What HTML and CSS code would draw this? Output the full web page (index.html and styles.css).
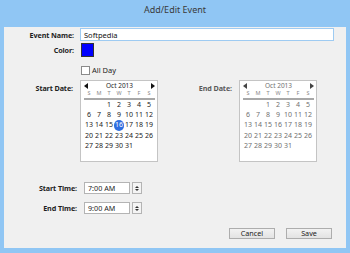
FILE: index.html
```html
<!DOCTYPE html>
<html lang="en">
<head>
    <meta charset="UTF-8">
    <title>Add/Edit Event</title>
    <link rel="stylesheet" href="styles.css">
</head>
<body>
    <div class="window">
        <div class="titlebar">Add/Edit Event</div>
        <div class="client">
            <div class="row">
                <label class="lbl">Event Name:</label>
                <input class="text-input" type="text" value="Softpedia">
            </div>
            <div class="row row-color">
                <label class="lbl">Color:</label>
                <span class="swatch"></span>
            </div>
            <div class="row row-allday">
                <span class="lbl"></span>
                <span class="check"></span>
                <span class="check-text">All Day</span>
            </div>

            <div class="row row-dates">
                <label class="lbl lbl-date">Start Date:</label>
                <div class="calendar" id="startCal"></div>
                <label class="lbl lbl-date lbl-end">End Date:</label>
                <div class="calendar disabled" id="endCal"></div>
            </div>

            <div class="row row-time">
                <label class="lbl lbl-time">Start Time:</label>
                <div class="time-box">
                    <span class="time-text">7:00 AM</span>
                    <span class="spin"><i class="up"></i><i class="down"></i></span>
                </div>
            </div>
            <div class="row row-time row-time2">
                <label class="lbl lbl-time">End Time:</label>
                <div class="time-box">
                    <span class="time-text">9:00 AM</span>
                    <span class="spin"><i class="up"></i><i class="down"></i></span>
                </div>
            </div>

            <div class="buttons">
                <button class="btn">Cancel</button>
                <button class="btn">Save</button>
            </div>
        </div>
    </div>

    <script>
        function buildCalendar(el, selected) {
            const names = ['S', 'M', 'T', 'W', 'T', 'F', 'S'];
            let html = '<div class="cal-head"><span class="arr arr-l"></span>' +
                '<span class="cal-title">Oct 2013</span><span class="arr arr-r"></span></div>';
            html += '<div class="cal-names">';
            names.forEach(n => html += '<span>' + n + '</span>');
            html += '</div><div class="cal-days">';
            // Oct 1 2013 is a Tuesday
            for (let i = 0; i < 2; i++) html += '<span></span>';
            for (let d = 1; d <= 31; d++) {
                const cls = d === selected ? ' class="sel"' : '';
                html += '<span' + cls + '>' + d + '</span>';
            }
            html += '</div>';
            el.innerHTML = html;
        }
        buildCalendar(document.getElementById('startCal'), 16);
        buildCalendar(document.getElementById('endCal'), 0);
    </script>
</body>
</html>
```

FILE: styles.css
```css
body {
    margin: 0;
    font-family: "Noto Sans", "Open Sans", sans-serif;
    font-size: 8px;
    color: #1e1e1e;
}
.window {
    width: 350px;
    height: 253px;
    box-sizing: border-box;
    background: #90c6f4;
    padding: 0 4px 5px 4px;
    display: flex;
    flex-direction: column;
}
.titlebar {
    height: 27px;
    line-height: 19px;
    text-align: center;
    font-size: 9px;
    color: #3a3a3a;
}
.client {
    flex: 1;
    background: #f0f0f0;
    padding-top: 1px;
}
.row {
    display: flex;
    align-items: center;
}
.lbl {
    width: 70px;
    margin-right: 6px;
    text-align: right;
    font-weight: bold;
    font-size: 7.2px;
    letter-spacing: -0.1px;
    flex-shrink: 0;
}
.text-input {
    width: 254px;
    height: 13px;
    box-sizing: border-box;
    border: 1px solid #9ecbf2;
    padding: 0 3px;
    font-family: inherit;
    font-size: 7.5px;
    color: #111;
    outline: none;
}
.row-color {
    margin-top: 2px;
}
.swatch {
    width: 13px;
    height: 14px;
    box-sizing: border-box;
    background: #0000ff;
    border: 1px solid #333;
    margin-left: 1px;
}
.row-allday {
    margin-top: 8px;
}
.check {
    width: 7px;
    height: 7px;
    background: #fff;
    border: 1px solid #8a8a8a;
    margin-left: 1px;
}
.check-text {
    margin-left: 2px;
    font-size: 7.5px;
}
.row-dates {
    margin-top: 5px;
    align-items: flex-start;
}
.lbl-date {
    width: 69px;
    margin-right: 7px;
    padding-top: 3px;
}
.lbl-end {
    width: 74px;
    margin-right: 7px;
    color: #5a5a5a;
}
.calendar {
    width: 78px;
    height: 82px;
    box-sizing: border-box;
    background: #fff;
    border: 1px solid #c4c4c4;
    padding: 1px 2px 0 3px;
    font-size: 7px;
}
.cal-head {
    display: flex;
    align-items: center;
    justify-content: space-between;
    height: 7px;
}
.cal-title {
    font-size: 6.5px;
}
.arr {
    width: 0;
    height: 0;
    border-top: 3px solid transparent;
    border-bottom: 3px solid transparent;
}
.arr-l {
    border-right: 4px solid #111;
}
.arr-r {
    border-left: 4px solid #111;
}
.cal-names {
    display: grid;
    grid-template-columns: repeat(7, 10px);
    height: 7px;
    line-height: 7px;
    margin-top: 1px;
    font-size: 5.5px;
    color: #888;
    text-align: center;
    border-bottom: 2px solid #a8a8a8;
    padding-bottom: 1px;
}
.cal-days {
    display: grid;
    grid-template-columns: repeat(7, 10px);
    grid-auto-rows: 10.2px;
    text-align: center;
    line-height: 10px;
    color: #222;
}
.cal-days .sel {
    background: #2f6ee0;
    color: #fff;
    border-radius: 50%;
}
.disabled .cal-days,
.disabled .cal-title {
    color: #707070;
}
.disabled .arr-l {
    border-right-color: #444;
}
.disabled .arr-r {
    border-left-color: #444;
}
.row-time {
    margin-top: 20px;
}
.row-time2 {
    margin-top: 8px;
}
.lbl-time {
    width: 73px;
    margin-right: 7px;
}
.time-box {
    display: flex;
    height: 12px;
}
.time-text {
    width: 46px;
    box-sizing: border-box;
    background: #fff;
    border: 1px solid #b4b4b4;
    padding-left: 3px;
    line-height: 10px;
    font-size: 7.2px;
}
.spin {
    width: 10px;
    margin-left: 2px;
    box-sizing: border-box;
    border: 1px solid #b4b4b4;
    background: #f4f4f4;
    display: flex;
    flex-direction: column;
    align-items: center;
    justify-content: center;
    gap: 1px;
}
.spin i {
    width: 0;
    height: 0;
    border-left: 2px solid transparent;
    border-right: 2px solid transparent;
}
.spin .up {
    border-bottom: 2px solid #333;
}
.spin .down {
    border-top: 2px solid #333;
}
.buttons {
    display: flex;
    justify-content: flex-end;
    gap: 11px;
    margin-top: 14px;
    padding-right: 14px;
}
.btn {
    width: 46px;
    height: 11px;
    padding: 0;
    border: 1px solid #adadad;
    background: linear-gradient(#f2f2f2, #e3e3e3);
    font-family: inherit;
    font-size: 7.2px;
    line-height: 9px;
    color: #222;
}
```
